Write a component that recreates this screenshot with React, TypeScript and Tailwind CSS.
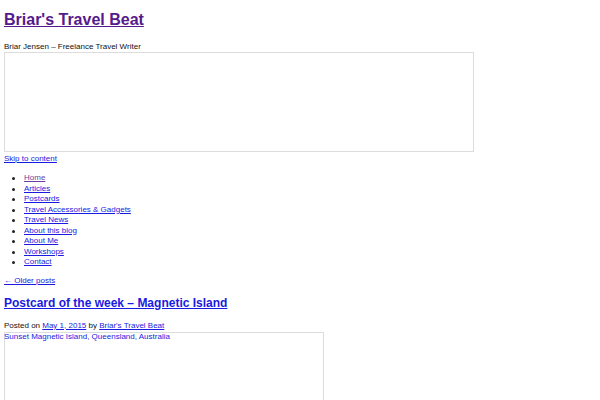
const MENU = [
  { label: 'Home', visited: true },
  { label: 'Articles' },
  { label: 'Postcards' },
  { label: 'Travel Accessories & Gadgets' },
  { label: 'Travel News' },
  { label: 'About this blog' },
  { label: 'About Me' },
  { label: 'Workshops' },
  { label: 'Contact' },
]

export default function App() {
  return (
    <div
      className="min-h-[400px] bg-white px-[4px] pt-[4px] text-[8px] leading-[9px] text-[#111]"
      style={{ fontFamily: '"Liberation Sans", Arial, sans-serif' }}
    >
      {/* Header */}
      <h1 className="mt-[7px] mb-[13px] text-[16px] font-bold leading-[18px]">
        <a href="#" className="text-[#551a8b] underline">Briar's Travel Beat</a>
      </h1>
      <div>Briar Jensen – Freelance Travel Writer</div>
      <div className="mt-[1px] h-[100px] w-[470px] border border-[#dcdcdc]" />

      {/* Nav */}
      <div className="mt-[2px]">
        <a href="#" className="text-[#1a1ae0] underline">Skip to content</a>
      </div>
      <ul className="mt-[10px] pl-[20px] leading-[10.5px]">
        {MENU.map(m => (
          <li key={m.label} className="relative">
            {/* bullet */}
            <span className="absolute -left-[12px] top-[4px] h-[3px] w-[3px] rounded-full bg-[#222]" />
            <a href="#" className={m.visited ? 'text-[#6a3fa0] underline' : 'text-[#1a1ae0] underline'}>
              {m.label}
            </a>
          </li>
        ))}
      </ul>

      {/* Content */}
      <div className="mt-[8px]">
        <a href="#" className="text-[#1a1ae0] underline">← Older posts</a>
      </div>
      <h2 className="mt-[11px] text-[12px] font-bold leading-[14px]">
        <a href="#" className="text-[#1a1ae0] underline">Postcard of the week – Magnetic Island</a>
      </h2>
      <div className="mt-[11px]">
        Posted on <a href="#" className="text-[#1a1ae0] underline">May 1, 2015</a> by{' '}
        <a href="#" className="text-[#1a1ae0] underline">Briar's Travel Beat</a>
      </div>
      <div className="mt-[2px] h-[140px] w-[320px] border border-[#dcdcdc]">
        <div className="-mt-px -ml-px text-[#1a1ae0]">Sunset Magnetic Island, Queensland, Australia</div>
      </div>
    </div>
  )
}
